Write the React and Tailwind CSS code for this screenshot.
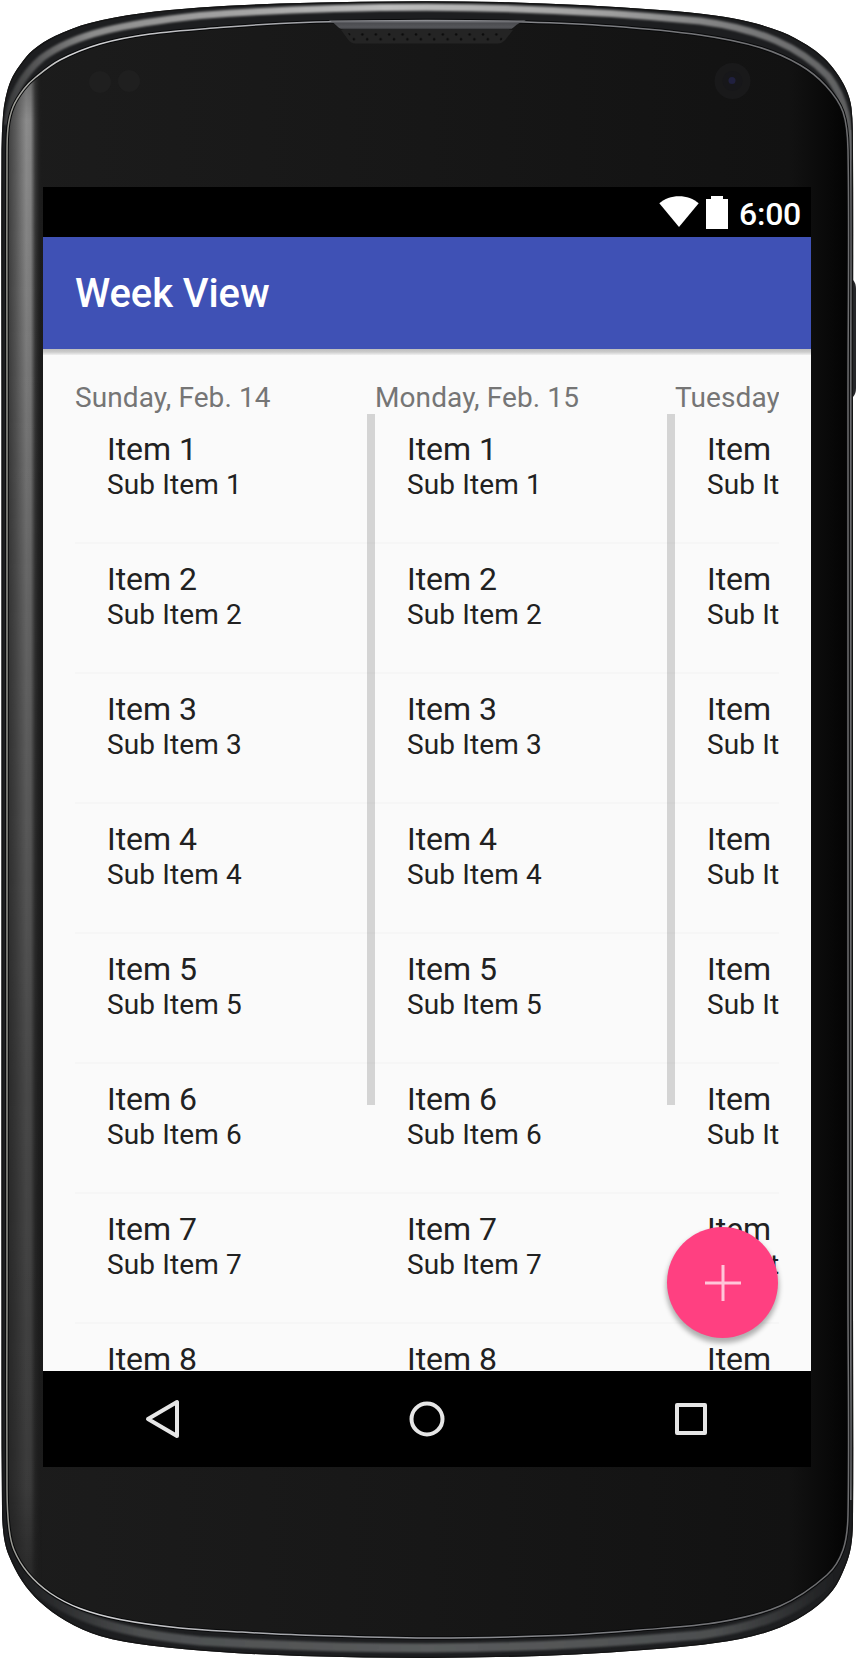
import React from "react";

const OUTER = [
  [1.5, 830], [1.5, 400], [1.5, 150], [3, 115], [5.5, 98], [11, 80], [20, 65], [33, 50], [55, 36], [90, 23],
  [140, 13.5], [200, 7.5], [280, 3.5], [360, 1.7], [427, 1.2], [500, 2], [580, 5], [660, 10], [715, 15.5], [750, 22], [782, 32], [807, 45], [824, 58],
  [836, 72], [846, 89], [851.5, 108], [853, 150], [853, 400], [853, 830], [853, 1300], [853, 1520], [851, 1547], [845, 1567],
  [833, 1590], [812, 1610], [780, 1627.5], [740, 1639], [690, 1646], [610, 1652.5], [540, 1656], [427, 1658], [300, 1656],
  [220, 1652], [150, 1645.5], [100, 1636], [66, 1621], [40, 1602], [22, 1581], [9, 1556], [4, 1538], [2, 1510], [1.5, 1300],
];

const INNER = [
  [7, 830], [7, 400], [7, 160], [8, 128], [13, 107], [24, 89], [36, 77], [60, 60], [100, 44],
  [150, 34], [220, 27.5], [280, 23.5], [330, 21.8], [427, 20.5], [525, 22], [610, 26], [700, 35], [760, 47.5], [800, 65], [826, 86],
  [843, 112], [848, 150], [848, 400], [848, 830], [848, 1300], [848, 1515], [843, 1550], [827, 1575], [780, 1606], [720, 1622],
  [640, 1630], [556, 1635.5], [427, 1638], [300, 1635], [240, 1632], [180, 1628], [120, 1619.5], [80, 1608.5], [50, 1593],
  [28, 1573], [14, 1550], [9, 1528], [7, 1490], [7, 1300],
];

// Closed centripetal-style spline through the given points
function smooth(points) {
  const n = points.length;
  const at = (i) => points[(i + n) % n];
  const dist = (a, b) => Math.hypot(a[0] - b[0], a[1] - b[1]);
  let d = `M${points[0][0]} ${points[0][1]}`;
  for (let i = 0; i < n; i++) {
    const [p0, p1, p2, p3] = [at(i - 1), at(i), at(i + 1), at(i + 2)];
    const len = dist(p1, p2) / 3;
    const t1 = dist(p0, p2);
    const t2 = dist(p1, p3);
    d += `C${(p1[0] + ((p2[0] - p0[0]) / t1) * len).toFixed(2)} ${(p1[1] + ((p2[1] - p0[1]) / t1) * len).toFixed(2)} `;
    d += `${(p2[0] - ((p3[0] - p1[0]) / t2) * len).toFixed(2)} ${(p2[1] - ((p3[1] - p1[1]) / t2) * len).toFixed(2)} ${p2[0]} ${p2[1]}`;
  }
  return d + "Z";
}

const outerPath = smooth(OUTER);
const innerPath = smooth(INNER);
const topSheen =
  "M7 125C10 98 22 75 42 58C75 33 125 24 200 15.5C280 9 350 7.2 427 7.2C510 7.5 610 12 700 21C760 29 800 47 828 76C846 99 850 125 850.5 160";
const bottomSheen =
  "M20 1574C60 1618 120 1633 200 1641C280 1646 350 1648 427 1648C510 1648 610 1643 700 1635C760 1627 805 1610 836 1574";

function DeviceFrame() {
  return (
    <svg className="absolute inset-0" width="856" height="1659" viewBox="0 0 856 1659" aria-hidden="true">
      <defs>
        <linearGradient id="face" x1="0" x2="1" y1="0" y2="0">
          <stop offset="0" stopColor="#1c1c1c" />
          <stop offset="0.5" stopColor="#171717" />
          <stop offset="0.93" stopColor="#121212" />
          <stop offset="0.965" stopColor="#0b0b0b" />
          <stop offset="1" stopColor="#030303" />
        </linearGradient>
        <linearGradient id="strip" gradientUnits="userSpaceOnUse" x1="7" x2="42" y1="0" y2="0">
          <stop offset="0" stopColor="#3c3c3c" />
          <stop offset="0.25" stopColor="#5c5c5c" />
          <stop offset="0.55" stopColor="#8c8c8c" />
          <stop offset="0.68" stopColor="#858585" />
          <stop offset="0.8" stopColor="#3c3c3c" />
          <stop offset="1" stopColor="#1c1c1c" stopOpacity="0" />
        </linearGradient>
        <linearGradient id="stripFade" x1="0" x2="0" y1="0" y2="1">
          <stop offset="0" stopColor="#fff" stopOpacity="0.5" />
          <stop offset="0.05" stopColor="#fff" />
          <stop offset="0.15" stopColor="#fff" stopOpacity="0.9" />
          <stop offset="0.35" stopColor="#fff" stopOpacity="0.65" />
          <stop offset="0.65" stopColor="#fff" stopOpacity="0.4" />
          <stop offset="0.9" stopColor="#fff" stopOpacity="0.28" />
          <stop offset="1" stopColor="#fff" stopOpacity="0" />
        </linearGradient>
        <linearGradient id="sheen" x1="0" x2="1" y1="0" y2="0">
          <stop offset="0" stopColor="#3a3b3c" />
          <stop offset="0.1" stopColor="#8c8c8c" />
          <stop offset="0.45" stopColor="#bdbdbd" />
          <stop offset="0.7" stopColor="#a2a2a2" />
          <stop offset="1" stopColor="#5d5e5f" />
        </linearGradient>
        <linearGradient id="bottomSheen" x1="0" x2="1" y1="0" y2="0">
          <stop offset="0" stopColor="#4d4f50" stopOpacity="0" />
          <stop offset="0.15" stopColor="#4d4f50" />
          <stop offset="0.5" stopColor="#5a5c5d" />
          <stop offset="0.85" stopColor="#4d4f50" />
          <stop offset="1" stopColor="#4d4f50" stopOpacity="0" />
        </linearGradient>
        <linearGradient id="edge" gradientUnits="userSpaceOnUse" x1="0" x2="856" y1="0" y2="0">
          <stop offset="0" stopColor="#8d8d85" />
          <stop offset="0.08" stopColor="#d6d6d8" />
          <stop offset="0.35" stopColor="#a2a3a8" />
          <stop offset="0.75" stopColor="#77787c" />
          <stop offset="1" stopColor="#6c6c6e" />
        </linearGradient>
        <linearGradient id="slot" x1="0" x2="0" y1="0" y2="1">
          <stop offset="0" stopColor="#85868b" />
          <stop offset="0.3" stopColor="#4b4c50" />
          <stop offset="0.75" stopColor="#55565a" />
          <stop offset="1" stopColor="#303134" />
        </linearGradient>
        <mask id="stripMask">
          <rect width="60" height="1610" y="40" fill="url(#stripFade)" />
        </mask>
        <clipPath id="outerClip">
          <path d={outerPath} />
        </clipPath>
        <clipPath id="innerClip">
          <path d={innerPath} />
        </clipPath>
        <filter id="soft" x="-5%" y="-50%" width="110%" height="200%">
          <feGaussianBlur stdDeviation="1.3" />
        </filter>
        <pattern id="holes" width="13.4" height="9.6" patternUnits="userSpaceOnUse" x="347" y="32">
          <circle cx="2" cy="2.4" r="1.3" fill="#0a0a0a" />
          <circle cx="6.8" cy="7.2" r="1.3" fill="#0a0a0a" />
        </pattern>
      </defs>
      <path d="M853 280q3 3 3 9v99q0 6-3 9z" fill="#26272a" />
      <path d={outerPath} fill="#1d1e20" />
      <g clipPath="url(#outerClip)">
        <path d={topSheen} fill="none" stroke="url(#sheen)" strokeWidth="7" filter="url(#soft)" />
        <path d={bottomSheen} fill="none" stroke="url(#bottomSheen)" strokeWidth="9" filter="url(#soft)" />
        <path d="M850.8 130V1500" stroke="#6a6b6e" strokeWidth="2" />
        <path d={outerPath} fill="none" stroke="#141414" strokeWidth="2.5" />
      </g>
      <path d={innerPath} fill="url(#face)" />
      <g clipPath="url(#innerClip)">
        <rect x="7" y="40" width="36" height="1610" fill="url(#strip)" mask="url(#stripMask)" />
      </g>
      <path d={innerPath} fill="none" stroke="#08090a" strokeWidth="3.5" />
      <path d={innerPath} fill="none" stroke="url(#edge)" strokeWidth="1.5" />
      <path d="M329 20.5H526Q519 22 514 27Q512 29.5 508 29.5H344Q340 29.5 337.500 26.500Q334 22.500 329 20.500z" fill="url(#slot)" />
      <path d="M341 30H513L506 39Q502 43.500 498 43.500H355Q351 43.500 348 39.500z" fill="#242424" />
      <path d="M347 32H508L500 42H354z" fill="url(#holes)" />
      <circle cx="100" cy="82" r="11" fill="#1f1f1f" />
      <circle cx="129" cy="81" r="11" fill="#1f1f1f" />
      <circle cx="732.500" cy="81" r="18" fill="#19191a" />
      <circle cx="732.500" cy="81" r="10" fill="#17171a" />
      <circle cx="732" cy="80.500" r="3.500" fill="#20203f" />
    </svg>
  );
}

function StatusBar() {
  return (
    <div className="flex h-[50px] shrink-0 items-start justify-end bg-black pr-[10px] text-white">
      <svg className="mt-[9px] mr-[7px]" width="40" height="32" viewBox="0 0 40 32" fill="#fff">
        <path d="M20 31L.3 7.300C5.500 2.800 12.500.3 20 .3S34.500 2.800 39.700 7.300z" />
      </svg>
      <svg className="mt-[9px] mr-[11px]" width="22" height="33" viewBox="0 0 22 33" fill="#fff">
        <path d="M5 0H17V3H22V33H0V3H5z" />
      </svg>
      <span className="mt-[8px] text-[32px] leading-[38px] font-medium tracking-[-0.25px]">6:00</span>
    </div>
  );
}

const ITEMS = [1, 2, 3, 4, 5, 6, 7, 8];

function DayColumn({ title, scrollbar }) {
  return (
    <section className="w-[300px] shrink-0">
      <h2 className="h-[33px] text-[28px] leading-[33px] tracking-[0.1px] whitespace-nowrap text-[#757575]">{title}</h2>
      <div className="relative">
        {ITEMS.map((n) => (
          <div key={n} className="h-[130px] border-b-2 border-[#f6f6f6] pt-[16px] pl-[32px] whitespace-nowrap text-[#212121]">
            <div className="text-[32px] leading-[38px] tracking-[-0.05px]">Item {n}</div>
            <div className="text-[28px] leading-[33px] tracking-[0.13px]">Sub Item {n}</div>
          </div>
        ))}
        {scrollbar && <div className="absolute top-0 right-0 h-[691px] w-2 bg-black/15" />}
      </div>
    </section>
  );
}

function NavBar() {
  return (
    <nav className="flex h-24 shrink-0 items-center justify-between bg-black pr-[100px] pl-[100px]">
      <svg width="40" height="44" viewBox="0 0 40 44" fill="none" stroke="#e6e6e6" strokeWidth="4" strokeLinejoin="round">
        <path d="M5 22L34 5V39z" />
      </svg>
      <svg width="40" height="40" viewBox="0 0 40 40" fill="none" stroke="#e6e6e6" strokeWidth="4">
        <circle cx="20" cy="20" r="15.500" />
      </svg>
      <svg width="40" height="40" viewBox="0 0 40 40" fill="none" stroke="#e6e6e6" strokeWidth="4" strokeLinejoin="round">
        <rect x="6" y="6" width="28" height="28" />
      </svg>
    </nav>
  );
}

export default function App() {
  return (
    <div className="relative h-[1659px] w-[856px] overflow-hidden bg-white pt-[187px] pl-[43px] font-['Roboto',sans-serif]">
      <DeviceFrame />
      <div className="relative flex h-[1280px] w-[768px] flex-col overflow-hidden bg-[#fafafa]">
        <StatusBar />
        <header className="flex h-[112px] shrink-0 items-center bg-[#3f51b5] pl-8">
          <h1 className="text-[40px] leading-[47px] font-medium tracking-[-0.1px] text-white">Week View</h1>
        </header>
        <main className="relative min-h-0 flex-1 overflow-hidden">
          <div className="h-[6px] bg-linear-to-b from-[#bdbdbd] via-[#cccccc] to-[#f0f0f0]" />
          <div className="mx-8 mt-[26px] flex overflow-hidden">
            <DayColumn title="Sunday, Feb. 14" scrollbar />
            <DayColumn title="Monday, Feb. 15" scrollbar />
            <DayColumn title="Tuesday" />
          </div>
          <button
            aria-label="Add"
            className="absolute right-[33px] bottom-[33px] flex size-[111px] items-center justify-center rounded-full bg-[#ff4081] shadow-[0_4px_5px_1px_rgba(0,0,0,0.3)]"
          >
            <svg width="36" height="36" viewBox="0 0 36 36" fill="#ffc6d9">
              <path d="M16.500 0h3v16.500H36v3H19.500V36h-3V19.500H0v-3h16.500z" />
            </svg>
          </button>
        </main>
        <NavBar />
      </div>
    </div>
  );
}
